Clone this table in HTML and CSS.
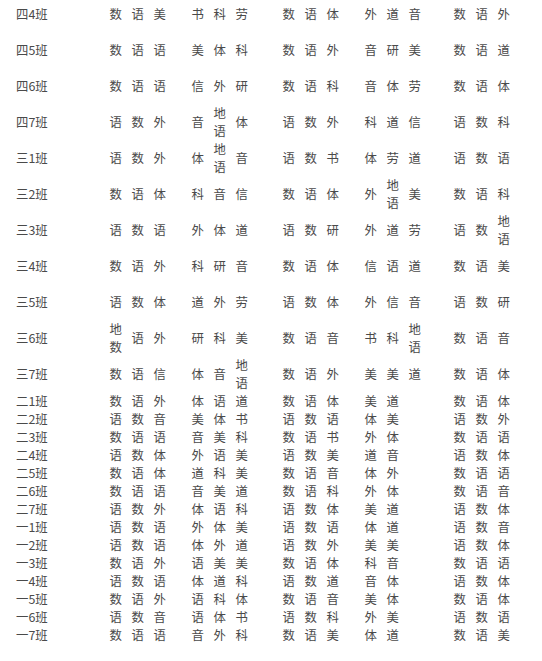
FILE: index.html
```html
<!DOCTYPE html>
<html lang="zh-CN">
<head>
<meta charset="utf-8">
<title>课表</title>
<link rel="stylesheet" href="styles.css">
</head>
<body>
<div class="sheet">
  <div class="row tall"><div class="lbl">四4班</div><div class="grp"><span>数</span><span>语</span><span>美</span></div><div class="grp g2"><span>书</span><span>科</span><span>劳</span></div><div class="grp g3"><span>数</span><span>语</span><span>体</span></div><div class="grp g4"><span>外</span><span>道</span><span>音</span></div><div class="grp g5"><span>数</span><span>语</span><span>外</span></div></div>
  <div class="row tall"><div class="lbl">四5班</div><div class="grp"><span>数</span><span>语</span><span>语</span></div><div class="grp g2"><span>美</span><span>体</span><span>科</span></div><div class="grp g3"><span>数</span><span>语</span><span>外</span></div><div class="grp g4"><span>音</span><span>研</span><span>美</span></div><div class="grp g5"><span>数</span><span>语</span><span>道</span></div></div>
  <div class="row tall"><div class="lbl">四6班</div><div class="grp"><span>数</span><span>语</span><span>语</span></div><div class="grp g2"><span>信</span><span>外</span><span>研</span></div><div class="grp g3"><span>数</span><span>语</span><span>科</span></div><div class="grp g4"><span>音</span><span>体</span><span>劳</span></div><div class="grp g5"><span>数</span><span>语</span><span>体</span></div></div>
  <div class="row tall"><div class="lbl">四7班</div><div class="grp"><span>语</span><span>数</span><span>外</span></div><div class="grp g2"><span>音</span><span>地语</span><span>体</span></div><div class="grp g3"><span>语</span><span>数</span><span>外</span></div><div class="grp g4"><span>科</span><span>道</span><span>信</span></div><div class="grp g5"><span>语</span><span>数</span><span>科</span></div></div>
  <div class="row tall"><div class="lbl">三1班</div><div class="grp"><span>语</span><span>数</span><span>外</span></div><div class="grp g2"><span>体</span><span>地语</span><span>音</span></div><div class="grp g3"><span>语</span><span>数</span><span>书</span></div><div class="grp g4"><span>体</span><span>劳</span><span>道</span></div><div class="grp g5"><span>语</span><span>数</span><span>语</span></div></div>
  <div class="row tall"><div class="lbl">三2班</div><div class="grp"><span>数</span><span>语</span><span>体</span></div><div class="grp g2"><span>科</span><span>音</span><span>信</span></div><div class="grp g3"><span>数</span><span>语</span><span>体</span></div><div class="grp g4"><span>外</span><span>地语</span><span>美</span></div><div class="grp g5"><span>数</span><span>语</span><span>科</span></div></div>
  <div class="row tall"><div class="lbl">三3班</div><div class="grp"><span>语</span><span>数</span><span>语</span></div><div class="grp g2"><span>外</span><span>体</span><span>道</span></div><div class="grp g3"><span>语</span><span>数</span><span>研</span></div><div class="grp g4"><span>外</span><span>道</span><span>劳</span></div><div class="grp g5"><span>语</span><span>数</span><span>地语</span></div></div>
  <div class="row tall"><div class="lbl">三4班</div><div class="grp"><span>数</span><span>语</span><span>外</span></div><div class="grp g2"><span>科</span><span>研</span><span>音</span></div><div class="grp g3"><span>数</span><span>语</span><span>体</span></div><div class="grp g4"><span>信</span><span>语</span><span>道</span></div><div class="grp g5"><span>数</span><span>语</span><span>美</span></div></div>
  <div class="row tall"><div class="lbl">三5班</div><div class="grp"><span>语</span><span>数</span><span>体</span></div><div class="grp g2"><span>道</span><span>外</span><span>劳</span></div><div class="grp g3"><span>语</span><span>数</span><span>体</span></div><div class="grp g4"><span>外</span><span>信</span><span>音</span></div><div class="grp g5"><span>语</span><span>数</span><span>研</span></div></div>
  <div class="row tall"><div class="lbl">三6班</div><div class="grp"><span>地数</span><span>语</span><span>外</span></div><div class="grp g2"><span>研</span><span>科</span><span>美</span></div><div class="grp g3"><span>数</span><span>语</span><span>音</span></div><div class="grp g4"><span>书</span><span>科</span><span>地语</span></div><div class="grp g5"><span>数</span><span>语</span><span>音</span></div></div>
  <div class="row tall"><div class="lbl">三7班</div><div class="grp"><span>数</span><span>语</span><span>信</span></div><div class="grp g2"><span>体</span><span>音</span><span>地语</span></div><div class="grp g3"><span>数</span><span>语</span><span>外</span></div><div class="grp g4"><span>美</span><span>美</span><span>道</span></div><div class="grp g5"><span>数</span><span>语</span><span>体</span></div></div>

  <div class="row"><div class="lbl">二1班</div><div class="grp"><span>数</span><span>语</span><span>外</span></div><div class="grp g2"><span>体</span><span>语</span><span>道</span></div><div class="grp g3"><span>数</span><span>语</span><span>体</span></div><div class="grp g4"><span>美</span><span>道</span></div><div class="grp g5"><span>数</span><span>语</span><span>体</span></div></div>
  <div class="row"><div class="lbl">二2班</div><div class="grp"><span>语</span><span>数</span><span>音</span></div><div class="grp g2"><span>美</span><span>体</span><span>书</span></div><div class="grp g3"><span>语</span><span>数</span><span>语</span></div><div class="grp g4"><span>体</span><span>美</span></div><div class="grp g5"><span>语</span><span>数</span><span>外</span></div></div>
  <div class="row"><div class="lbl">二3班</div><div class="grp"><span>数</span><span>语</span><span>语</span></div><div class="grp g2"><span>音</span><span>美</span><span>科</span></div><div class="grp g3"><span>数</span><span>语</span><span>书</span></div><div class="grp g4"><span>外</span><span>体</span></div><div class="grp g5"><span>数</span><span>语</span><span>语</span></div></div>
  <div class="row"><div class="lbl">二4班</div><div class="grp"><span>语</span><span>数</span><span>体</span></div><div class="grp g2"><span>外</span><span>语</span><span>美</span></div><div class="grp g3"><span>语</span><span>数</span><span>美</span></div><div class="grp g4"><span>道</span><span>音</span></div><div class="grp g5"><span>语</span><span>数</span><span>体</span></div></div>
  <div class="row"><div class="lbl">二5班</div><div class="grp"><span>数</span><span>语</span><span>体</span></div><div class="grp g2"><span>道</span><span>科</span><span>美</span></div><div class="grp g3"><span>数</span><span>语</span><span>音</span></div><div class="grp g4"><span>体</span><span>外</span></div><div class="grp g5"><span>数</span><span>语</span><span>语</span></div></div>
  <div class="row"><div class="lbl">二6班</div><div class="grp"><span>数</span><span>语</span><span>语</span></div><div class="grp g2"><span>音</span><span>美</span><span>道</span></div><div class="grp g3"><span>数</span><span>语</span><span>科</span></div><div class="grp g4"><span>外</span><span>体</span></div><div class="grp g5"><span>数</span><span>语</span><span>音</span></div></div>
  <div class="row"><div class="lbl">二7班</div><div class="grp"><span>语</span><span>数</span><span>外</span></div><div class="grp g2"><span>体</span><span>语</span><span>科</span></div><div class="grp g3"><span>语</span><span>数</span><span>体</span></div><div class="grp g4"><span>美</span><span>道</span></div><div class="grp g5"><span>语</span><span>数</span><span>体</span></div></div>
  <div class="row"><div class="lbl">一1班</div><div class="grp"><span>语</span><span>数</span><span>语</span></div><div class="grp g2"><span>外</span><span>体</span><span>美</span></div><div class="grp g3"><span>语</span><span>数</span><span>语</span></div><div class="grp g4"><span>体</span><span>道</span></div><div class="grp g5"><span>语</span><span>数</span><span>音</span></div></div>
  <div class="row"><div class="lbl">一2班</div><div class="grp"><span>语</span><span>数</span><span>语</span></div><div class="grp g2"><span>体</span><span>外</span><span>道</span></div><div class="grp g3"><span>语</span><span>数</span><span>外</span></div><div class="grp g4"><span>美</span><span>美</span></div><div class="grp g5"><span>语</span><span>数</span><span>体</span></div></div>
  <div class="row"><div class="lbl">一3班</div><div class="grp"><span>数</span><span>语</span><span>外</span></div><div class="grp g2"><span>语</span><span>美</span><span>美</span></div><div class="grp g3"><span>数</span><span>语</span><span>体</span></div><div class="grp g4"><span>科</span><span>音</span></div><div class="grp g5"><span>数</span><span>语</span><span>语</span></div></div>
  <div class="row"><div class="lbl">一4班</div><div class="grp"><span>语</span><span>数</span><span>语</span></div><div class="grp g2"><span>体</span><span>道</span><span>科</span></div><div class="grp g3"><span>语</span><span>数</span><span>道</span></div><div class="grp g4"><span>音</span><span>体</span></div><div class="grp g5"><span>语</span><span>数</span><span>体</span></div></div>
  <div class="row"><div class="lbl">一5班</div><div class="grp"><span>数</span><span>语</span><span>外</span></div><div class="grp g2"><span>语</span><span>科</span><span>体</span></div><div class="grp g3"><span>数</span><span>语</span><span>音</span></div><div class="grp g4"><span>美</span><span>体</span></div><div class="grp g5"><span>数</span><span>语</span><span>体</span></div></div>
  <div class="row"><div class="lbl">一6班</div><div class="grp"><span>语</span><span>数</span><span>音</span></div><div class="grp g2"><span>语</span><span>体</span><span>书</span></div><div class="grp g3"><span>语</span><span>数</span><span>科</span></div><div class="grp g4"><span>外</span><span>美</span></div><div class="grp g5"><span>语</span><span>数</span><span>语</span></div></div>
  <div class="row"><div class="lbl">一7班</div><div class="grp"><span>数</span><span>语</span><span>语</span></div><div class="grp g2"><span>音</span><span>外</span><span>科</span></div><div class="grp g3"><span>数</span><span>语</span><span>美</span></div><div class="grp g4"><span>体</span><span>道</span></div><div class="grp g5"><span>数</span><span>语</span><span>美</span></div></div>
</div>
</body>
</html>
```
FILE: styles.css
```css
html, body {
  margin: 0;
  padding: 0;
  background: #ffffff;
}

body {
  font-family: "Noto Sans CJK SC", "Noto Sans", sans-serif;
  font-size: 12.4px;
  line-height: 18px;
  color: #4a4a4a;
}

.sheet {
  margin-top: -4px;
}

.row {
  display: flex;
  align-items: center;
  height: 18px;
}

.row.tall {
  height: 36px;
}

.lbl {
  width: 109px;
  flex: 0 0 109px;
  box-sizing: border-box;
  padding-left: 16px;
  white-space: nowrap;
}

.grp {
  display: grid;
  grid-template-columns: repeat(3, 22px);
  align-items: center;
}

.grp span {
  display: block;
  width: 22px;
  padding-left: 0.5px;
  box-sizing: border-box;
}

.g2 { margin-left: 16px; }
.g3 { margin-left: 25px; }
.g4 { margin-left: 16px; }
.g5 { margin-left: 23px; }
```
